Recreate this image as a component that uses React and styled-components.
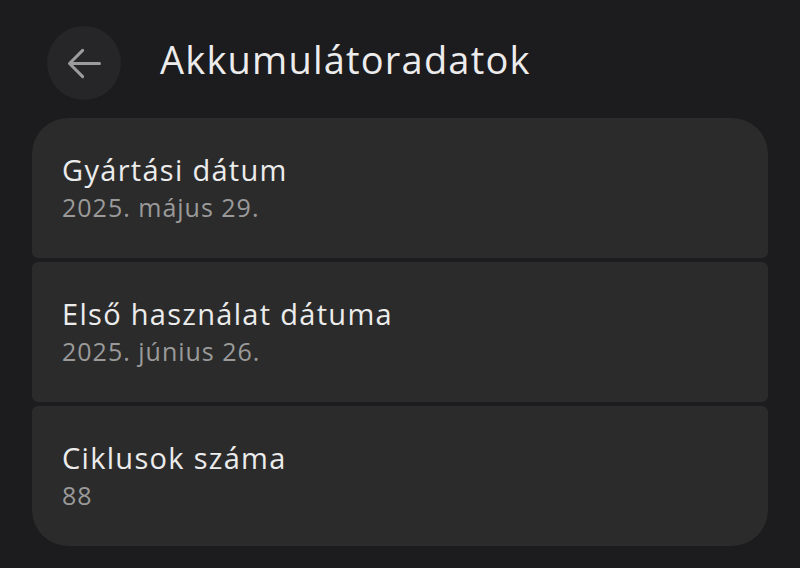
import styled, { createGlobalStyle } from "styled-components";

const GlobalStyle = createGlobalStyle`
  html, body {
    margin: 0;
    padding: 0;
    background: #1c1b1d;
  }
  body {
    font-family: "Open Sans", Roboto, sans-serif;
    -webkit-font-smoothing: antialiased;
  }
`;

const Page = styled.div`
  width: 800px;
  height: 568px;
  background: #1c1b1d;
  overflow: hidden;
`;

const Header = styled.header`
  display: flex;
  align-items: center;
  gap: 39px;
  padding: 26px 0 0 47px;
  height: 74px;
`;

const BackButton = styled.button`
  width: 74px;
  height: 74px;
  border-radius: 50%;
  border: none;
  background: #262527;
  display: flex;
  align-items: center;
  justify-content: center;
  padding: 0;
  color: #9c9c9c;
`;

const Title = styled.h1`
  margin: 0 0 9px;
  font-size: 38px;
  line-height: 46px;
  font-weight: 500;
  color: #ececec;
  letter-spacing: 1.2px;
`;

const List = styled.div`
  display: flex;
  flex-direction: column;
  gap: 4px;
  margin: 18px 32px 0;
`;

const Card = styled.div`
  height: 140px;
  background: #2b2b2b;
  border-radius: ${({ $pos }) =>
    $pos === "first"
      ? "36px 36px 6px 6px"
      : $pos === "last"
      ? "6px 6px 36px 36px"
      : "6px"};
  display: flex;
  flex-direction: column;
  padding: 33px 30px 0;
  box-sizing: border-box;
`;

const Label = styled.div`
  font-size: 29px;
  line-height: 38px;
  font-weight: 500;
  color: #ececec;
  letter-spacing: 1.3px;
`;

const Value = styled.div`
  font-size: 25px;
  line-height: 36px;
  color: #9a9a9a;
  letter-spacing: 1px;
`;

const items = [
  { label: "Gyártási dátum", value: "2025. május 29." },
  { label: "Első használat dátuma", value: "2025. június 26." },
  { label: "Ciklusok száma", value: "88" },
];

const App = () => {
  return (
    <Page>
      <GlobalStyle />
      <Header>
        <BackButton aria-label="Vissza">
          <svg width="45" height="45" viewBox="0 0 24 24" fill="none">
            <path
              d="M20 12H4.5M11 5l-7 7 7 7"
              stroke="currentColor"
              strokeWidth="1.6"
              strokeLinecap="round"
              strokeLinejoin="round"
            />
          </svg>
        </BackButton>
        <Title>Akkumulátoradatok</Title>
      </Header>
      <List>
        {items.map((item, i) => (
          <Card
            key={item.label}
            $pos={i === 0 ? "first" : i === items.length - 1 ? "last" : "mid"}
          >
            <Label>{item.label}</Label>
            <Value>{item.value}</Value>
          </Card>
        ))}
      </List>
    </Page>
  );
};

export default App;
